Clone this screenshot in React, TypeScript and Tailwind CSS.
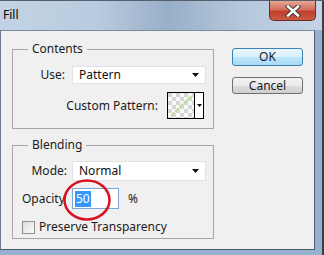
import React from 'react';

const Arrow = () => (
  <svg width="7" height="4" viewBox="0 0 7 4" className="shrink-0">
    <path d="M0 0h7L3.5 4z" fill="#111" />
  </svg>
);

const Select = ({ value, h }: { value: string; h: string }) => (
  <div className={`flex w-[134px] ${h} items-center justify-between bg-white pl-[6px] pr-[6px] border border-[#e2e2e2]`}>
    <span className="text-[12px] text-[#111]">{value}</span>
    <Arrow />
  </div>
);

const Swatch = () => (
  <div className="flex h-[27px] w-[37px] border border-black bg-white">
    <svg width="26" height="25" viewBox="0 0 26 25" className="shrink-0">
      <defs>
        <pattern id="chk" width="8" height="8" patternUnits="userSpaceOnUse">
          <rect width="8" height="8" fill="#fafafa" />
          <rect width="4" height="4" fill="#d6d6d6" />
          <rect x="4" y="4" width="4" height="4" fill="#d6d6d6" />
        </pattern>
      </defs>
      <rect width="26" height="25" fill="url(#chk)" />
      <path d="M3 23L23 3" stroke="#b8d88a" strokeWidth="2" strokeDasharray="2 1" />
      <path d="M5 23L24 5" stroke="#d9ecbf" strokeWidth="1" strokeDasharray="1 2" />
    </svg>
    <div className="flex flex-1 items-center justify-center border-l border-black">
      <svg width="5" height="3" viewBox="0 0 5 3">
        <path d="M0 0h5L2.5 3z" fill="#111" />
      </svg>
    </div>
  </div>
);

export default function App() {
  return (
    <div
      className="relative flex h-[255px] w-[324px] flex-col overflow-hidden border-t border-[#55606c] bg-[#95b1cf] text-[#1b1b1b]"
      style={{ fontFamily: '"Noto Sans", "Open Sans", sans-serif' }}
    >
      {/* title bar */}
      <div className="flex h-[29px] shrink-0 items-start justify-between bg-[linear-gradient(90deg,#c3d3e5_0%,#b9cbdf_30%,#98afc8_52%,#b5c8dc_75%,#c4d4e6_100%)]">
        <span className="ml-[3px] mt-[6px] text-[12px] leading-[16px] text-black">Fill</span>
        <div className="mr-[8px] flex h-[20px] w-[47px] items-center justify-center rounded-b-[5px] border border-t-0 border-[#6b2a24] bg-[linear-gradient(180deg,#e8a595_0%,#d2705c_45%,#c0402c_55%,#c85a45_100%)]">
          <svg width="16" height="12" viewBox="0 0 16 12">
            <path d="M3 1.5L13 10.5M13 1.5L3 10.5" stroke="#3a3a3a" strokeWidth="4.5" strokeLinecap="square" />
            <path d="M3 1.5L13 10.5M13 1.5L3 10.5" stroke="#ffffff" strokeWidth="2.5" strokeLinecap="square" />
          </svg>
        </div>
      </div>

      {/* client area */}
      <div className="flex h-[220px] w-[315px] border border-t-[#7d8a98] border-r-[#52606e] border-b-[#4b5865] border-l-[#6c7a89] bg-[#f0f0f0] pl-[11px] pt-[10px]">
        <div className="flex w-[202px] flex-col">
          <fieldset className="h-[88px] border border-[#a6a6a6]">
            <legend className="ml-[15px] px-[4px] text-[12px] leading-[16px]">Contents</legend>
            <div className="mt-[9px] flex items-center justify-end pr-[7px]">
              <span className="mr-[7px] text-[12px]">Use:</span>
              <Select value="Pattern" h="h-[18px]" />
            </div>
            <div className="mt-[8px] flex items-center justify-end pr-[9px]">
              <span className="mr-[9px] text-[12px]">Custom Pattern:</span>
              <Swatch />
            </div>
          </fieldset>

          <fieldset className="mt-[8px] h-[102px] border border-[#a6a6a6]">
            <legend className="ml-[15px] px-[4px] text-[12px] leading-[16px]">Blending</legend>
            <div className="mt-[8px] flex items-center justify-end pr-[7px]">
              <span className="mr-[5px] text-[12px]">Mode:</span>
              <Select value="Normal" h="h-[20px]" />
            </div>
            <div className="mt-[7px] flex items-center pl-[9px]">
              <span className="w-[50px] text-[12px]">Opacity</span>
              <div className="flex h-[21px] w-[47px] items-center border border-[#7aa6d6] bg-white pl-[2px]">
                <span className="bg-[#3399ff] px-[1px] text-[12px] leading-[16px] text-white">50</span>
              </div>
              <span className="ml-[9px] text-[12px]">%</span>
            </div>
            <div className="mt-[11px] flex items-center pl-[9px]">
              <div className="h-[13px] w-[13px] border border-[#8e8f8f] bg-[linear-gradient(135deg,#dcdcdc,#fbfbfb)]" />
              <span className="ml-[4px] text-[12px] leading-[14px]">Preserve Transparency</span>
            </div>
          </fieldset>
        </div>

        <div className="ml-[18px] flex flex-col pt-[7px]">
          <button className="flex h-[18px] w-[71px] items-center justify-center rounded-[3px] border border-[#3c7fb1] bg-[linear-gradient(180deg,#eaf6fd_0%,#d9f0fc_50%,#bee6fd_51%,#a7d9f5_100%)] text-[12px] leading-none">
            OK
          </button>
          <button className="mt-[11px] flex h-[17px] w-[71px] items-center justify-center rounded-[3px] border border-[#707070] bg-[linear-gradient(180deg,#f2f2f2_0%,#ebebeb_50%,#dddddd_51%,#cfcfcf_100%)] text-[12px] leading-none">
            Cancel
          </button>
        </div>
      </div>

      {/* red annotation circle */}
      <svg className="absolute left-[62px] top-[177px]" width="50" height="44" viewBox="0 0 50 44">
        <ellipse cx="25" cy="22" rx="22.5" ry="19.5" fill="none" stroke="#d8121e" strokeWidth="2.5" />
      </svg>

      <div className="absolute right-0 top-0 h-full w-[2px] bg-[#3a3f45]" />
    </div>
  );
}
